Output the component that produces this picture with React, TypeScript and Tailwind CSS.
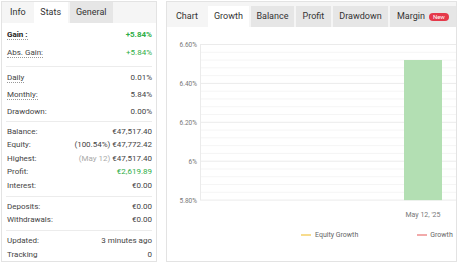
import React from 'react';

type Row = { label: string; value: React.ReactNode; tip?: boolean; bold?: boolean };

const groups: { h: string; pad: string; rows: Row[] }[] = [
  {
    h: 'h-[18px]',
    pad: 'pt-[3px] pb-[4px]',
    rows: [
      { label: 'Gain :', value: <span className="text-[#2fae45] font-bold">+5.84%</span>, tip: true, bold: true },
      { label: 'Abs. Gain:', value: <span className="text-[#2fae45]">+5.84%</span>, tip: true },
    ],
  },
  {
    h: 'h-[17px]',
    pad: 'pt-[2px] pb-[1px]',
    rows: [
      { label: 'Daily', value: '0.01%', tip: true },
      { label: 'Monthly:', value: '5.84%', tip: true },
      { label: 'Drawdown:', value: '0.00%' },
    ],
  },
  {
    h: 'h-[13.5px]',
    pad: 'pt-[3px] pb-[3px]',
    rows: [
      { label: 'Balance:', value: '€47,517.40' },
      { label: 'Equity:', value: '(100.54%) €47,772.42' },
      {
        label: 'Highest:',
        value: (
          <>
            <span className="text-[#aaaaaa]">(May 12)</span> €47,517.40
          </>
        ),
      },
      { label: 'Profit:', value: <span className="text-[#2fae45]">€2,619.89</span> },
      { label: 'Interest:', value: '€0.00' },
    ],
  },
  {
    h: 'h-[13px]',
    pad: 'pt-[3.5px] pb-[3.5px]',
    rows: [
      { label: 'Deposits:', value: '€0.00' },
      { label: 'Withdrawals:', value: '€0.00' },
    ],
  },
  {
    h: 'h-[14px]',
    pad: 'pt-[3px] pb-0',
    rows: [
      { label: 'Updated:', value: '3 minutes ago' },
      { label: 'Tracking', value: '0' },
    ],
  },
];

function Chart() {
  const top = 17.5;
  const step = 38.9;
  const minor = Array.from({ length: 21 }, (_, i) => top + (i * step) / 5);
  const labels = ['6.60%', '6.40%', '6.20%', '6%', '5.80%'];
  return (
    <svg width="289" height="197" className="block">
      {minor.map((y, i) => (
        <line key={i} x1="33" x2="289" y1={y} y2={y} stroke={i % 5 === 0 ? '#ebebeb' : '#f5f5f5'} strokeWidth="1" />
      ))}
      <line x1="33.5" x2="33.5" y1={top} y2={top + 4 * step} stroke="#ebebeb" />
      {labels.map((l, i) => (
        <text key={l} x="30" y={top + i * step + 2.5} textAnchor="end" fontSize="6.5" fill="#777" fontFamily="Roboto, sans-serif">
          {l}
        </text>
      ))}
      <rect x="237" y="33" width="38" height={top + 4 * step - 33} fill="#b3dfb3" />
      <text x="256" y="189.5" textAnchor="middle" fontSize="7" fill="#777" fontFamily="Roboto, sans-serif">
        May 12, '25
      </text>
    </svg>
  );
}

export default function App() {
  return (
    <div className="w-[459px] h-[262px] bg-white flex font-['Roboto',sans-serif] text-[#444]">
      {/* stats panel */}
      <div className="ml-[1px] mt-[1px] w-[156px] h-[261px] border border-[#e3e3e3] flex flex-col">
        <div className="h-[25px] bg-[#f5f5f5] flex items-end text-[9px] text-[#333]">
          <div className="px-[8px] h-[21px] flex items-center">Info</div>
          <div className="w-[34px] h-[21px] bg-white flex items-center justify-center">Stats</div>
          <div className="ml-[2px] w-[43px] h-[21px] bg-[#e6e6e6] flex items-center justify-center">General</div>
        </div>
        <div className="flex flex-col text-[8px]">
          {groups.map((g, gi) => (
            <div key={gi} className={`${g.pad} mx-[4px] ${gi > 0 ? 'border-t border-[#ececec]' : ''}`}>
              {g.rows.map((r) => (
                <div key={r.label} className={`${g.h} flex items-center justify-between pl-[1px]`}>
                  <span
                    className={`${r.tip ? 'border-b border-dotted border-[#999] leading-[9px]' : ''} ${r.bold ? 'font-bold text-[#222]' : ''}`}
                  >
                    {r.label}
                  </span>
                  <span>{r.value}</span>
                </div>
              ))}
            </div>
          ))}
        </div>
      </div>

      {/* chart panel */}
      <div className="ml-[9px] mt-[1px] w-[291px] h-[261px] border border-[#e3e3e3] flex flex-col">
        <div className="h-[25px] bg-[#f5f5f5] flex items-end text-[9px] text-[#333]">
          <div className="pl-[9px] pr-[10px] h-[21px] flex items-center">Chart</div>
          <div className="w-[41px] h-[21px] bg-white flex items-center justify-center">Growth</div>
          <div className="ml-[2px] w-[43px] h-[21px] bg-[#e6e6e6] flex items-center justify-center">Balance</div>
          <div className="ml-[2px] w-[35px] h-[21px] bg-[#e6e6e6] flex items-center justify-center">Profit</div>
          <div className="ml-[2px] w-[55px] h-[21px] bg-[#e6e6e6] flex items-center justify-center">Drawdown</div>
          <div className="ml-[2px] w-[66px] h-[21px] bg-[#e6e6e6] flex items-center justify-center gap-[4px]">
            Margin
            <span className="bg-[#e5394a] text-white text-[6px] leading-[8px] px-[4px] rounded-full">New</span>
          </div>
        </div>
        <Chart />
        <div className="h-[22px] flex items-center text-[7px] text-[#666]">
          <div className="ml-[134px] w-[10px] h-[2px] bg-[#f7dc8e]" />
          <span className="ml-[4px]">Equity Growth</span>
          <div className="ml-[59px] w-[10px] h-[2px] bg-[#f2aaaa]" />
          <span className="ml-[3px]">Growth</span>
        </div>
      </div>
    </div>
  );
}
